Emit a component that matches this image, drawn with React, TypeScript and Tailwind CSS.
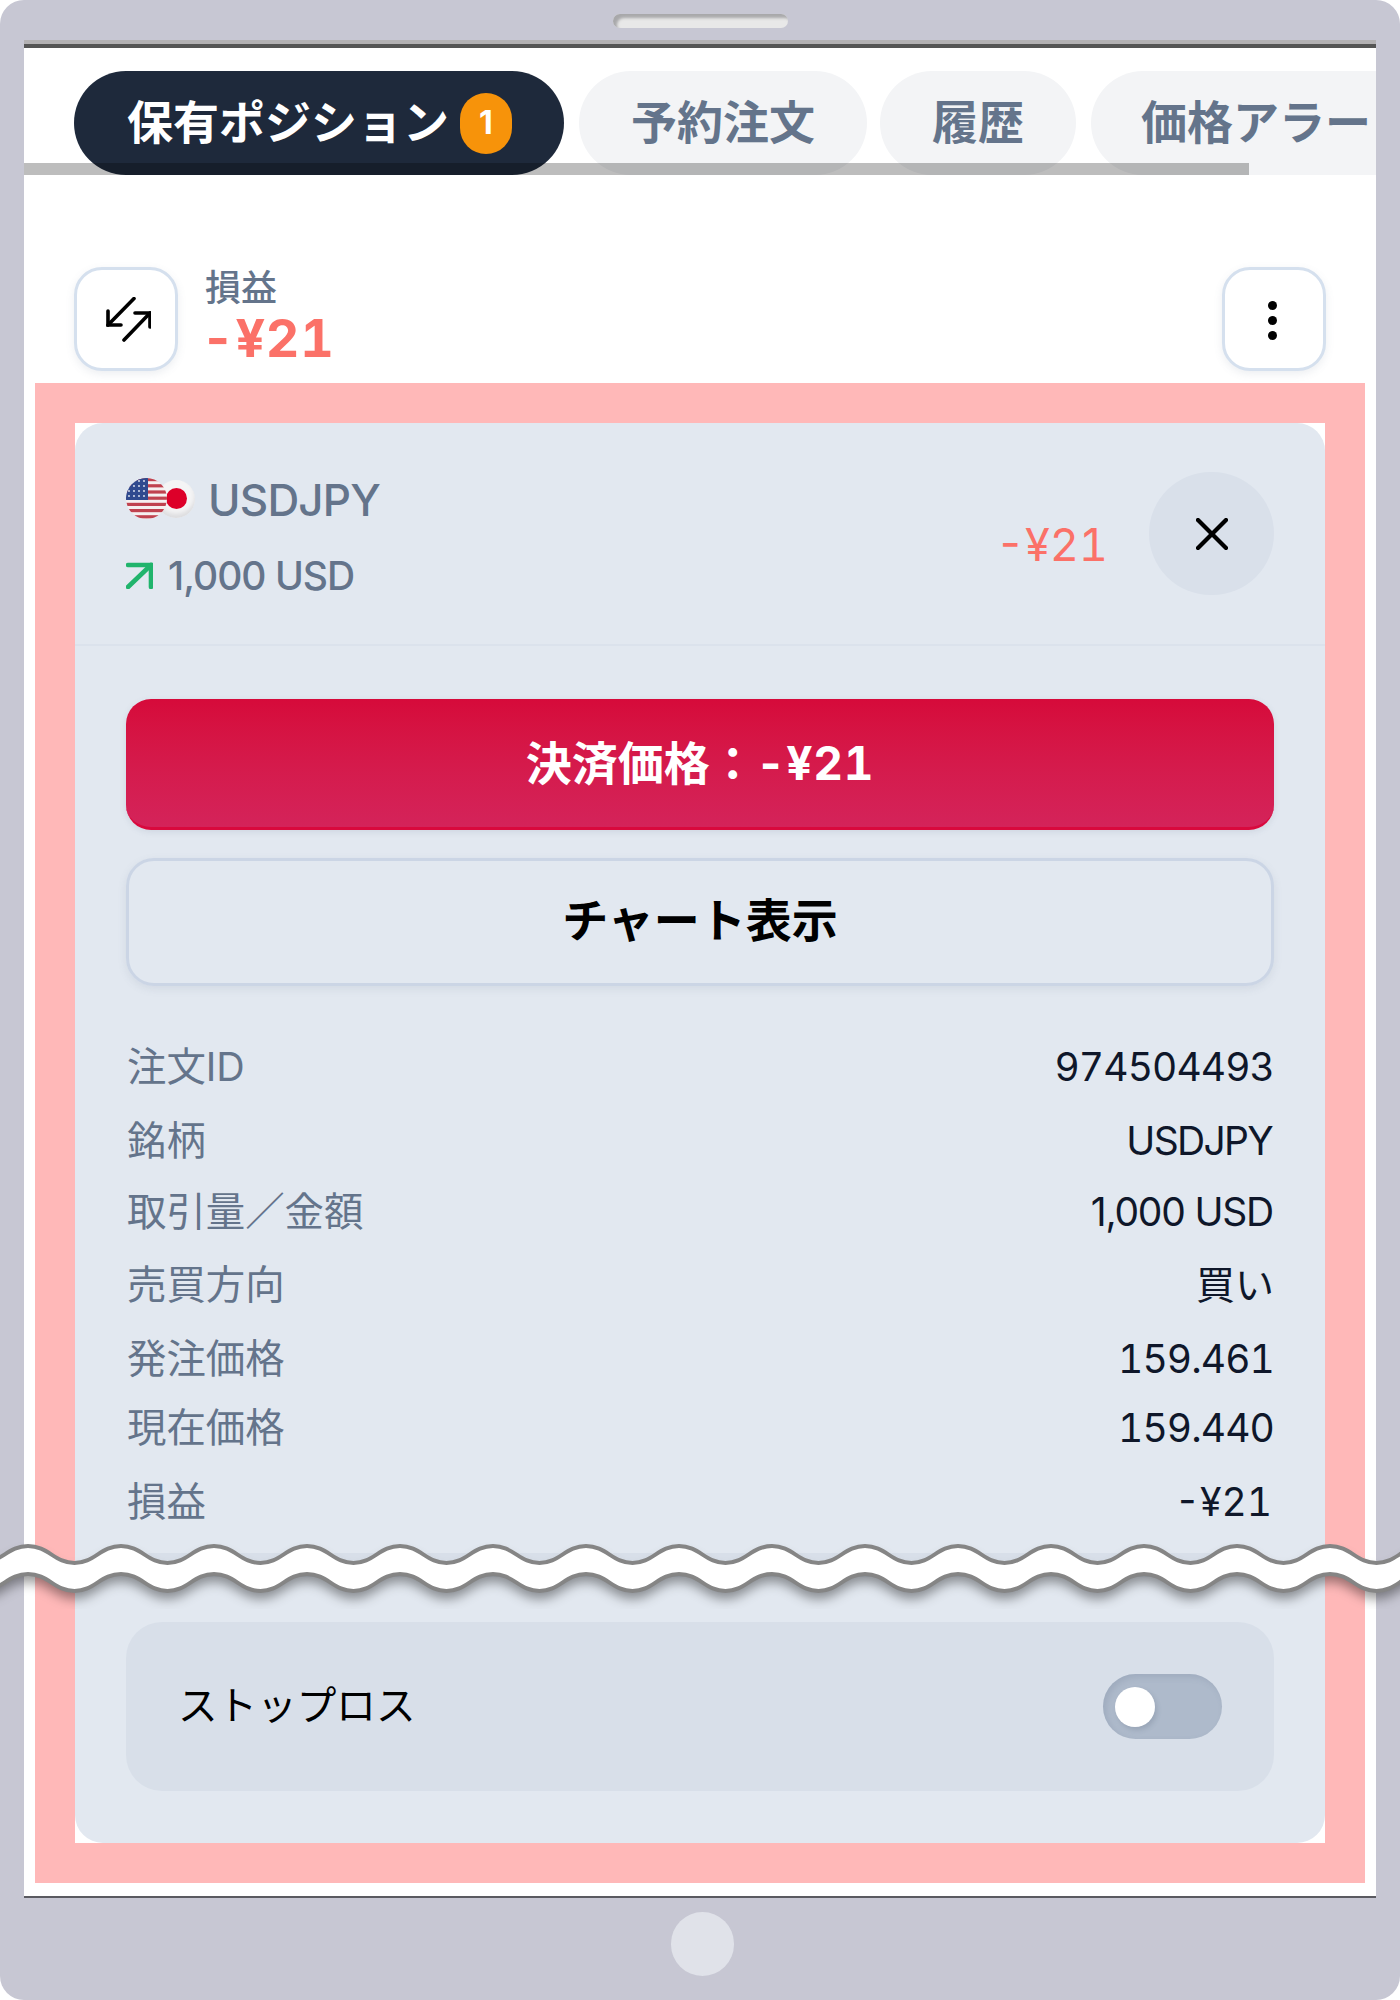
import React from "react";

function wave(offset: number) {
  const top = offset;
  const amp = 17;
  let d = "";
  let x = -65;
  d += `M${x} ${top}`;
  for (let i = 0; i < 17; i++) {
    d += ` C${x + 20} ${top},${x + 27} ${top + amp},${x + 46.5} ${top + amp}`;
    d += ` C${x + 66} ${top + amp},${x + 73} ${top},${x + 93} ${top}`;
    x += 93;
  }
  return d;
}

function waveFill() {
  let d = "";
  let x = -65;
  d += `M${x} 16`;
  for (let i = 0; i < 17; i++) {
    d += ` C${x + 20} 16,${x + 27} 33,${x + 46.5} 33`;
    d += ` C${x + 66} 33,${x + 73} 16,${x + 93} 16`;
    x += 93;
  }
  d += ` L${x} 44`;
  for (let i = 0; i < 17; i++) {
    d += ` C${x - 20} 44,${x - 27} 61,${x - 46.5} 61`;
    d += ` C${x - 66} 61,${x - 73} 44,${x - 93} 44`;
    x -= 93;
  }
  return d + " Z";
}

const rows: [string, string, string, string][] = [
  ["注文ID", "974504493", "h-[74px]", "tabular-nums tracking-[-0.9px]"],
  ["銘柄", "USDJPY", "h-[75px]", "tracking-[-1.7px] mr-[2px]"],
  ["取引量／金額", "1,000 USD", "h-[66px]", "tracking-[-1.2px] mr-[1px]"],
  ["売買方向", "買い", "h-[80px]", ""],
  ["発注価格", "159.461", "h-[68px]", "tabular-nums tracking-[-0.9px]"],
  ["現在価格", "159.440", "h-[70px]", "tabular-nums tracking-[-0.9px]"],
  ["損益", "-¥21", "h-[78px]", "tabular-nums mr-[2px]"],
];

function UsFlag() {
  const stripes = [0, 1, 2, 3, 4, 5, 6];
  return (
    <svg width="41" height="41" viewBox="0 0 41 41" className="absolute left-0 top-0">
      <defs>
        <clipPath id="usclip">
          <circle cx="20.5" cy="20.5" r="20.5" />
        </clipPath>
      </defs>
      <g clipPath="url(#usclip)">
        <rect width="41" height="41" fill="#f5f0f0" />
        {stripes.map((i) => (
          <rect key={i} x="0" y={i * 6.2} width="41" height="3.2" fill="#c0424f" />
        ))}
        <rect width="22" height="22" fill="#2f4a8f" />
        {[3, 8, 13, 18].map((y) =>
          [3, 8, 13, 18].map((x) => <circle key={`${x}-${y}`} cx={x} cy={y} r="0.9" fill="#e8ecf5" />)
        )}
      </g>
    </svg>
  );
}

export default function App() {
  return (
    <div className="relative w-[1400px] h-[2000px] overflow-hidden bg-white font-['Inter','Noto_Sans_CJK_JP',sans-serif]">
      <div className="h-full rounded-[24px] bg-[#c7c7d3] flex flex-col">
        <div className="h-[40px] flex justify-center pt-[14px] shrink-0">
          <div className="w-[175px] h-[14px] rounded-[7px] bg-[#e8e8e8] shadow-[inset_4px_4px_3px_#a8a8aa]" />
        </div>

        <div className="mx-[24px] h-[1858px] shrink-0 bg-white border-t-[4px] border-[#b3b1b3]">
          <div className="h-full flex flex-col border-t-[4px] border-b-[2px] border-t-[#555555] border-b-[#5a5a60]">
            <div className="relative mt-[23px] h-[104px] shrink-0 overflow-hidden flex pl-[50px] text-[46px] font-bold leading-none">
              <div className="w-[490px] shrink-0 rounded-full bg-[#1e293b] text-white flex items-center pl-[53px]">
                <span className="pb-[2px]">保有ポジション</span>
                <span className="ml-[11px] w-[52px] h-[61px] rounded-full bg-[#f7930a] text-[32px] flex items-center justify-center">1</span>
              </div>
              <div className="ml-[15px] w-[288px] shrink-0 rounded-full bg-[#f3f4f6] text-[#64748b] flex items-center justify-center pb-[2px]">予約注文</div>
              <div className="ml-[13px] w-[196px] shrink-0 rounded-full bg-[#f3f4f6] text-[#64748b] flex items-center justify-center pb-[2px]">履歴</div>
              <div className="ml-[15px] w-[400px] shrink-0 rounded-full bg-[#f3f4f6] text-[#64748b] flex items-center pl-[50px] pb-[2px] whitespace-nowrap">価格アラー</div>
              <div className="absolute left-0 bottom-0 w-[1225px] h-[12px] bg-[rgba(0,0,0,0.26)]" />
            </div>

            <div className="mt-[92px] px-[50px] h-[104px] shrink-0 flex items-center justify-between">
              <div className="flex items-center">
                <div className="w-[104px] h-[104px] rounded-[28px] border-[3px] border-[#d5e0ee] bg-white shadow-[0_3px_8px_rgba(100,116,139,0.12)] flex items-center justify-center pl-[3px] pt-[2px]">
                  <svg width="46" height="46" viewBox="0 0 46 46" fill="none" stroke="#000" strokeWidth="3.6" strokeLinecap="round" strokeLinejoin="miter">
                    <path d="M29 1.5 L3 28" />
                    <path d="M3 14 V28 H16" />
                    <path d="M19 43 L45 16" />
                    <path d="M30 16 H45 V30" />
                  </svg>
                </div>
                <div className="ml-[27px] flex flex-col -mt-[8px]">
                  <span className="text-[36px] leading-[44px] text-[#64748b] font-medium">損益</span>
                  <span className="mt-[3px] text-[52px] leading-[52px] font-bold text-[#fb7168] tabular-nums tracking-[0.8px] -ml-[4px]">-¥21</span>
                </div>
              </div>
              <div className="w-[104px] h-[104px] rounded-[28px] border-[3px] border-[#d5e0ee] bg-white shadow-[0_3px_8px_rgba(100,116,139,0.12)] flex flex-col items-center justify-center gap-[6px] pt-[2px] pr-[3px]">
                <span className="w-[9px] h-[9px] rounded-full bg-black" />
                <span className="w-[9px] h-[9px] rounded-full bg-black" />
                <span className="w-[9px] h-[9px] rounded-full bg-black" />
              </div>
            </div>

            <div className="mt-[12px] mx-[11px] h-[1500px] shrink-0 bg-[#ffb8b8] p-[40px]">
              <div className="h-full bg-white">
                <div className="h-full rounded-[28px] bg-[#e2e8f0] flex flex-col">
                  <div className="h-[223px] shrink-0 border-b-[2px] border-[#dbe2ec] px-[51px] flex justify-between items-center">
                    <div className="flex flex-col self-start pt-[54px]">
                      <div className="flex items-center h-[42px]">
                        <div className="relative w-[69px] h-[41px] shrink-0">
                          <div className="absolute left-[31px] top-[2px] w-[38px] h-[38px] rounded-full bg-[#f4f4f5] shadow-[inset_0_-4px_4px_#dddddf] flex items-center justify-center">
                            <div className="w-[21px] h-[21px] rounded-full bg-[#dd0029]" />
                          </div>
                          <UsFlag />
                        </div>
                        <span className="ml-[13px] mt-[3px] text-[44px] leading-none font-medium text-[#64748b] tracking-[-0.8px]">USDJPY</span>
                      </div>
                      <div className="flex items-center h-[40px] mt-[36px]">
                        <svg width="27" height="27" viewBox="0 0 27 27" fill="none" stroke="#20b46c" strokeWidth="4.6" strokeLinecap="round" strokeLinejoin="miter">
                          <path d="M2 3 H25 V25" />
                          <path d="M25 3 L2 25" />
                        </svg>
                        <span className="ml-[15px] text-[39px] leading-none font-medium text-[#64748b] tracking-[-1px]">1,000 USD</span>
                      </div>
                    </div>
                    <div className="flex items-center">
                      <span className="mt-[22px] text-[45px] leading-none text-[#fb7168] tabular-nums">-¥21</span>
                      <div className="ml-[41px] w-[125px] h-[123px] rounded-full bg-[#d9e0ea] flex items-center justify-center">
                        <svg width="32" height="32" viewBox="0 0 32 32" fill="none" stroke="#000" strokeWidth="4.2" strokeLinecap="round">
                          <path d="M2 2 L30 30" />
                          <path d="M30 2 L2 30" />
                        </svg>
                      </div>
                    </div>
                  </div>

                  <div className="px-[51px] pt-[53px] flex flex-col">
                    <div className="h-[131px] rounded-[25px] border-b-[3px] border-b-[#d9093d] bg-gradient-to-b from-[#d60a3a] to-[#d4235a] shadow-[0_2px_6px_rgba(100,116,139,0.15)] flex items-center justify-center text-white text-[46px] font-bold">
                      <span>決済価格：</span>
                      <span className="tabular-nums tracking-[0.8px]">-¥21</span>
                    </div>
                    <div className="mt-[28px] h-[128px] rounded-[28px] border-[3px] border-[#cbd5e5] shadow-[0_3px_8px_rgba(100,116,139,0.12)] flex items-center justify-center pb-[3px] text-black text-[46px] font-bold">
                      チャート表示
                    </div>

                    <div className="mt-[43px] flex flex-col">
                      {rows.map(([label, value, h, tw]) => (
                        <div key={label} className={`${h} flex items-center justify-between text-[39.4px] leading-none`}>
                          <span className="pl-[1px] pt-[3px] text-[#64748b]">{label}</span>
                          <span className={`text-[#0f172a] text-[39px] ${tw}`}>{value}</span>
                        </div>
                      ))}
                    </div>

                    <div className="mt-[13px] h-[24px] rounded-t-[36px] bg-[#d8dfe9]" />

                    <div className="mt-[45px] h-[169px] rounded-[36px] bg-[#d8dfe9] pl-[52px] pr-[52px] flex items-center justify-between">
                      <span className="text-[39.6px] leading-none text-black">ストップロス</span>
                      <div className="w-[119px] h-[65px] rounded-full bg-[#aebacb] shadow-[inset_3px_3px_6px_rgba(100,116,139,0.2)] flex items-center pl-[12px]">
                        <div className="w-[40px] h-[40px] rounded-full bg-white shadow-[2px_3px_5px_rgba(71,85,105,0.2)]" />
                      </div>
                    </div>
                  </div>
                </div>
              </div>
            </div>
          </div>
        </div>

        <div className="flex-1 flex items-center justify-center pb-[10px] pl-[5px]">
          <div className="w-[63px] h-[64px] rounded-full bg-[#e0e2e9]" />
        </div>
      </div>

      <svg width="1400" height="90" viewBox="0 0 1400 90" className="absolute left-0 top-[1530px]">
        <defs>
          <filter id="waveShadow" x="-5%" y="-30%" width="110%" height="170%">
            <feDropShadow dx="0" dy="8" stdDeviation="6" floodColor="#000" floodOpacity="0.4" />
          </filter>
        </defs>
        <path d={waveFill()} fill="#fff" filter="url(#waveShadow)" />
        <path d={wave(16)} fill="none" stroke="#858585" strokeWidth="4" />
        <path d={wave(44)} fill="none" stroke="#858585" strokeWidth="4" />
      </svg>
    </div>
  );
}
